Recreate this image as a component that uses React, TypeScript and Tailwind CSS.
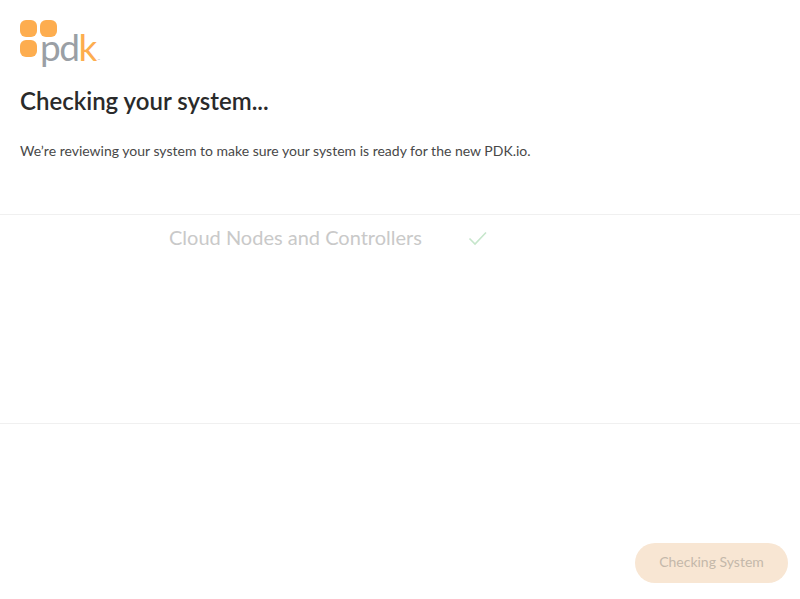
import React from "react";

function Logo() {
  return (
    <div className="flex items-start h-[49px]">
      <div className="grid grid-cols-2 gap-[3px] w-[37px]">
        <div className="w-[17px] h-[17px] rounded-[6px] bg-[#fdad4f]" />
        <div className="w-[17px] h-[17px] rounded-[6px] bg-[#fdad4f]" />
        <div className="w-[17px] h-[17px] rounded-[6px] bg-[#fdad4f]" />
      </div>
      <div className="ml-[-17px] mt-[8px] flex items-baseline font-['Lato',sans-serif] font-normal text-[37px] leading-[37px] tracking-[-1.5px]">
        <span className="text-[#9a9fa5]">pd</span>
        <span className="text-[#fdad4f]">k</span>
        <span className="ml-[2px] text-[3px] leading-[3px] tracking-normal text-[#b5b5b5]">™</span>
      </div>
    </div>
  );
}

export default function App() {
  return (
    <div className="w-[800px] h-[599px] bg-white flex flex-col font-['Lato',sans-serif] text-[#222]">
      <div className="h-[215px] px-5 pt-5 border-b border-[#f0f0f0] box-border">
        <Logo />
        <h1 className="mt-[17px] text-[24px] leading-[30px] font-semibold text-[#2a2a2a]">Checking your system...</h1>
        <p className="mt-[25px] text-[14px] leading-[20px] text-[#484848]">
          We’re reviewing your system to make sure your system is ready for the new PDK.io.
        </p>
      </div>
      <div className="h-[209px] border-b border-[#f0f0f0] box-border pt-[9px] pl-[169px]">
        <div className="flex items-center h-[28px]">
          <span className="text-[20px] leading-[26px] pb-[2px] text-[#c9c9c9] w-[298px]">Cloud Nodes and Controllers</span>
          <svg width="22" height="22" viewBox="0 0 22 22" fill="none">
            <path d="M2.5 11.5 L8 17 L19 5.5" stroke="#c6e6cb" strokeWidth="1.6" />
          </svg>
        </div>
      </div>
      <div className="flex-1 flex justify-end items-end pr-3 pb-4">
        <div className="w-[153px] h-[40px] rounded-full bg-[#f8e6d3] flex items-center justify-center pb-[3px] text-[14px] text-[#c4b8aa]">
          Checking System
        </div>
      </div>
    </div>
  );
}
